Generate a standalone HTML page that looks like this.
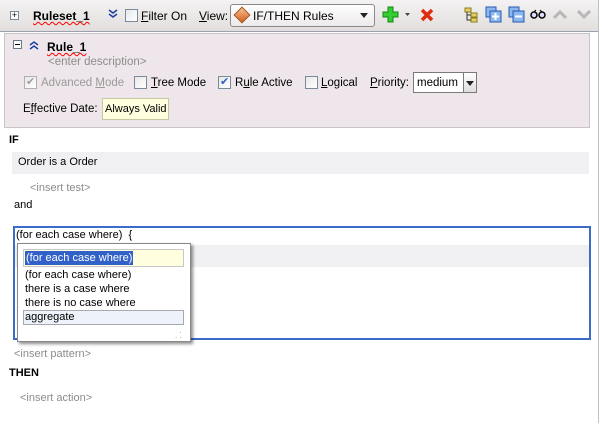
<!DOCTYPE html>
<html><head><style>
*{margin:0;padding:0;box-sizing:border-box}
body{width:605px;height:423px;overflow:hidden;background:#fff;font-family:"Liberation Sans",sans-serif;font-size:11px;color:#000;position:relative}
.a{position:absolute;white-space:nowrap}
.cb{position:absolute;width:13px;height:13px;border:1px solid #7a8a9a;background:linear-gradient(135deg,#e8e8e8,#fff)}
.g{color:#8c8c8c}
.b{font-weight:bold}
u{text-decoration:underline}
</style></head><body>
<div class="a" style="left:0;top:0;width:599px;height:32px;background:linear-gradient(#f4f2f2,#e2dede);border-bottom:1px solid #9aa0b0"></div>
<div class="a" style="left:10px;top:11px;width:9px;height:9px;border:1px solid #7a8a9a;background:#fff;font-size:9px;line-height:7px;text-align:center">+</div>
<div class="a b" style="left:33px;top:9px;font-size:12px;text-decoration:underline wavy red;text-decoration-thickness:1px">Ruleset_1</div>
<svg class="a" style="left:108px;top:9px" width="10" height="10"><path d="M1 1l4 3 4-3M1 5l4 3 4-3" stroke="#1a40a0" stroke-width="1.5" fill="none"/></svg>
<div class="cb" style="left:125px;top:9px"></div>
<div class="a" style="left:141px;top:9px;font-size:12px"><u>F</u>ilter On</div>
<div class="a" style="left:199px;top:9px;font-size:12px"><u>V</u>iew:</div>
<div class="a" style="left:230px;top:4px;width:145px;height:23px;border:1px solid #8a8a8a;border-radius:3px;background:linear-gradient(#fff,#eceaea)"></div>
<div class="a" style="left:236px;top:9px;width:12px;height:12px;transform:rotate(45deg);background:linear-gradient(135deg,#f8c090,#d06020);border:1px solid #a04810"></div>
<div class="a" style="left:253px;top:9px;font-size:12px">IF/THEN Rules</div>
<svg class="a" style="left:360px;top:13px" width="8" height="5"><path d="M0 0h8L4 5z" fill="#222"/></svg>
<svg class="a" style="left:382px;top:6px" width="18" height="18"><path d="M6 1h5v5h5v5h-5v5H6v-5H1V6h5z" fill="#3c3" stroke="#181" stroke-width="1"/></svg>
<svg class="a" style="left:405px;top:13px" width="5" height="3"><path d="M0 0h5L2.5 3z" fill="#444"/></svg>
<svg class="a" style="left:419px;top:7px" width="16" height="16"><path d="M3 3l10 10M13 3L3 13" stroke="#e02a10" stroke-width="3.5"/></svg>
<svg class="a" style="left:463px;top:7px" width="16" height="16"><rect x="2" y="1" width="6" height="4" fill="#e8d060" stroke="#8a7a20"/><rect x="8" y="6" width="6" height="4" fill="#e8d060" stroke="#8a7a20"/><rect x="8" y="11" width="6" height="4" fill="#e8d060" stroke="#8a7a20"/><path d="M4 5v3h4M4 8v5h4" stroke="#333" fill="none"/></svg>
<svg class="a" style="left:485px;top:6px" width="17" height="17"><rect x="1" y="1" width="10" height="10" fill="#8cb8ee" stroke="#2858b0"/><rect x="5" y="5" width="11" height="11" fill="#8cb8ee" stroke="#2858b0"/><path d="M10.5 7v7M7 10.5h7" stroke="#fff" stroke-width="2"/></svg>
<svg class="a" style="left:508px;top:6px" width="17" height="17"><rect x="1" y="1" width="10" height="10" fill="#8cb8ee" stroke="#2858b0"/><rect x="5" y="5" width="11" height="11" fill="#8cb8ee" stroke="#2858b0"/><path d="M7 10.5h7" stroke="#fff" stroke-width="2"/></svg>
<svg class="a" style="left:530px;top:9px" width="16" height="10"><circle cx="4" cy="6" r="3" fill="#ddf" stroke="#000" stroke-width="1.5"/><circle cx="12" cy="6" r="3" fill="#ddf" stroke="#000" stroke-width="1.5"/><path d="M4 3l2-2M12 3l-2-2" stroke="#000"/></svg>
<svg class="a" style="left:553px;top:10px" width="14" height="9"><path d="M1 8l6-6 6 6" stroke="#b8b8b8" stroke-width="3" fill="none"/></svg>
<svg class="a" style="left:577px;top:10px" width="14" height="9"><path d="M1 1l6 6 6-6" stroke="#b8b8b8" stroke-width="3" fill="none"/></svg>
<div class="a" style="left:598px;top:0;width:1px;height:423px;background:#c0c0c0"></div>
<div class="a" style="left:4px;top:33px;width:586px;height:95px;background:#eee6ea;border:1px solid #c8c4c6"></div>
<div class="a" style="left:13px;top:40px;width:9px;height:9px;border:1px solid #6a7a8a;background:#fff"></div>
<div class="a" style="left:15px;top:44px;width:5px;height:1px;background:#000"></div>
<svg class="a" style="left:29px;top:40px" width="10" height="10"><path d="M1 5l4-3 4 3M1 9l4-3 4 3" stroke="#1a40a0" stroke-width="1.5" fill="none"/></svg>
<div class="a b" style="left:47px;top:40px;font-size:12px;text-decoration:underline wavy red;text-decoration-thickness:1px">Rule_1</div>
<div class="a g" style="left:48px;top:56px;font-size:11.5px">&lt;enter description&gt;</div>
<div class="cb" style="left:24px;top:76px;border-color:#b0b0b0"></div>
<div class="a" style="left:26px;top:75px;color:#a0a0a0;font-size:11px">✔</div>
<div class="a" style="left:41px;top:77px;font-size:11.5px;color:#999">Advanced <u>M</u>ode</div>
<div class="cb" style="left:134px;top:76px"></div>
<div class="a" style="left:151px;top:77px;font-size:11.5px"><u>T</u>ree Mode</div>
<div class="cb" style="left:218px;top:76px"></div>
<div class="a" style="left:220px;top:75px;color:#3060c0;font-size:11px">✔</div>
<div class="a" style="left:235px;top:77px;font-size:11.5px">R<u>u</u>le Active</div>
<div class="cb" style="left:305px;top:76px"></div>
<div class="a" style="left:321px;top:77px;font-size:11.5px"><u>L</u>ogical</div>
<div class="a" style="left:370px;top:77px;font-size:11.5px"><u>P</u>riority:</div>
<div class="a" style="left:413px;top:72px;width:64px;height:21px;border:1px solid #7a7a7a;background:#fff"></div>
<div class="a" style="left:417px;top:77px;font-size:11.5px">medium</div>
<div class="a" style="left:463px;top:73px;width:13px;height:19px;border-left:1px solid #7a7a7a;background:linear-gradient(#fff,#ddd)"></div>
<svg class="a" style="left:466px;top:81px" width="8" height="5"><path d="M0 0h8L4 5z" fill="#222"/></svg>
<div class="a" style="left:23px;top:103px;font-size:11.5px">E<u>f</u>fective Date:</div>
<div class="a" style="left:102px;top:98px;width:67px;height:22px;border:1px solid #c8c8a0;background:#ffffe0"></div>
<div class="a" style="left:105px;top:103px;font-size:11px">Always Valid</div>
<div class="a b" style="left:9px;top:134px">IF</div>
<div class="a" style="left:12px;top:152px;width:577px;height:22px;background:#f0f0f2"></div>
<div class="a" style="left:18px;top:156px">Order is a Order</div>
<div class="a g" style="left:30px;top:182px">&lt;insert test&gt;</div>
<div class="a" style="left:14px;top:199px">and</div>
<div class="a" style="left:13px;top:226px;width:578px;height:114px;border:2px solid #3a6cc8"></div>
<div class="a" style="left:16px;top:229px;font-size:11px">(for each case where)&nbsp; {</div>
<div class="a" style="left:15px;top:245px;width:574px;height:22px;background:#f0f0f2"></div>
<div class="a" style="left:17px;top:243px;width:174px;height:99px;background:#fff;border:1px solid #888;box-shadow:2px 2px 3px rgba(0,0,0,.45)"></div>
<div class="a" style="left:23px;top:249px;width:161px;height:18px;background:#ffffe0;border:1px solid #c8c8c8"></div>
<div class="a" style="left:25px;top:251px;background:#3161c8;color:#fff;font-size:11px;padding:0 1px;line-height:14px">(for each case where)</div>
<div class="a" style="left:25px;top:269px;font-size:11px">(for each case where)</div>
<div class="a" style="left:25px;top:283px;font-size:11px">there is a case where</div>
<div class="a" style="left:25px;top:297px;font-size:11px">there is no case where</div>
<div class="a" style="left:23px;top:310px;width:161px;height:15px;background:#eef2fa;border:1px solid #a8a8b0"></div>
<div class="a" style="left:25px;top:311px;font-size:11px">aggregate</div>
<div class="a" style="left:175px;top:328px;color:#999;font-size:8px;line-height:5px">&nbsp;&nbsp;.<br>. .</div>
<div class="a g" style="left:14px;top:348px">&lt;insert pattern&gt;</div>
<div class="a b" style="left:9px;top:367px">THEN</div>
<div class="a g" style="left:20px;top:392px">&lt;insert action&gt;</div>
</body></html>
